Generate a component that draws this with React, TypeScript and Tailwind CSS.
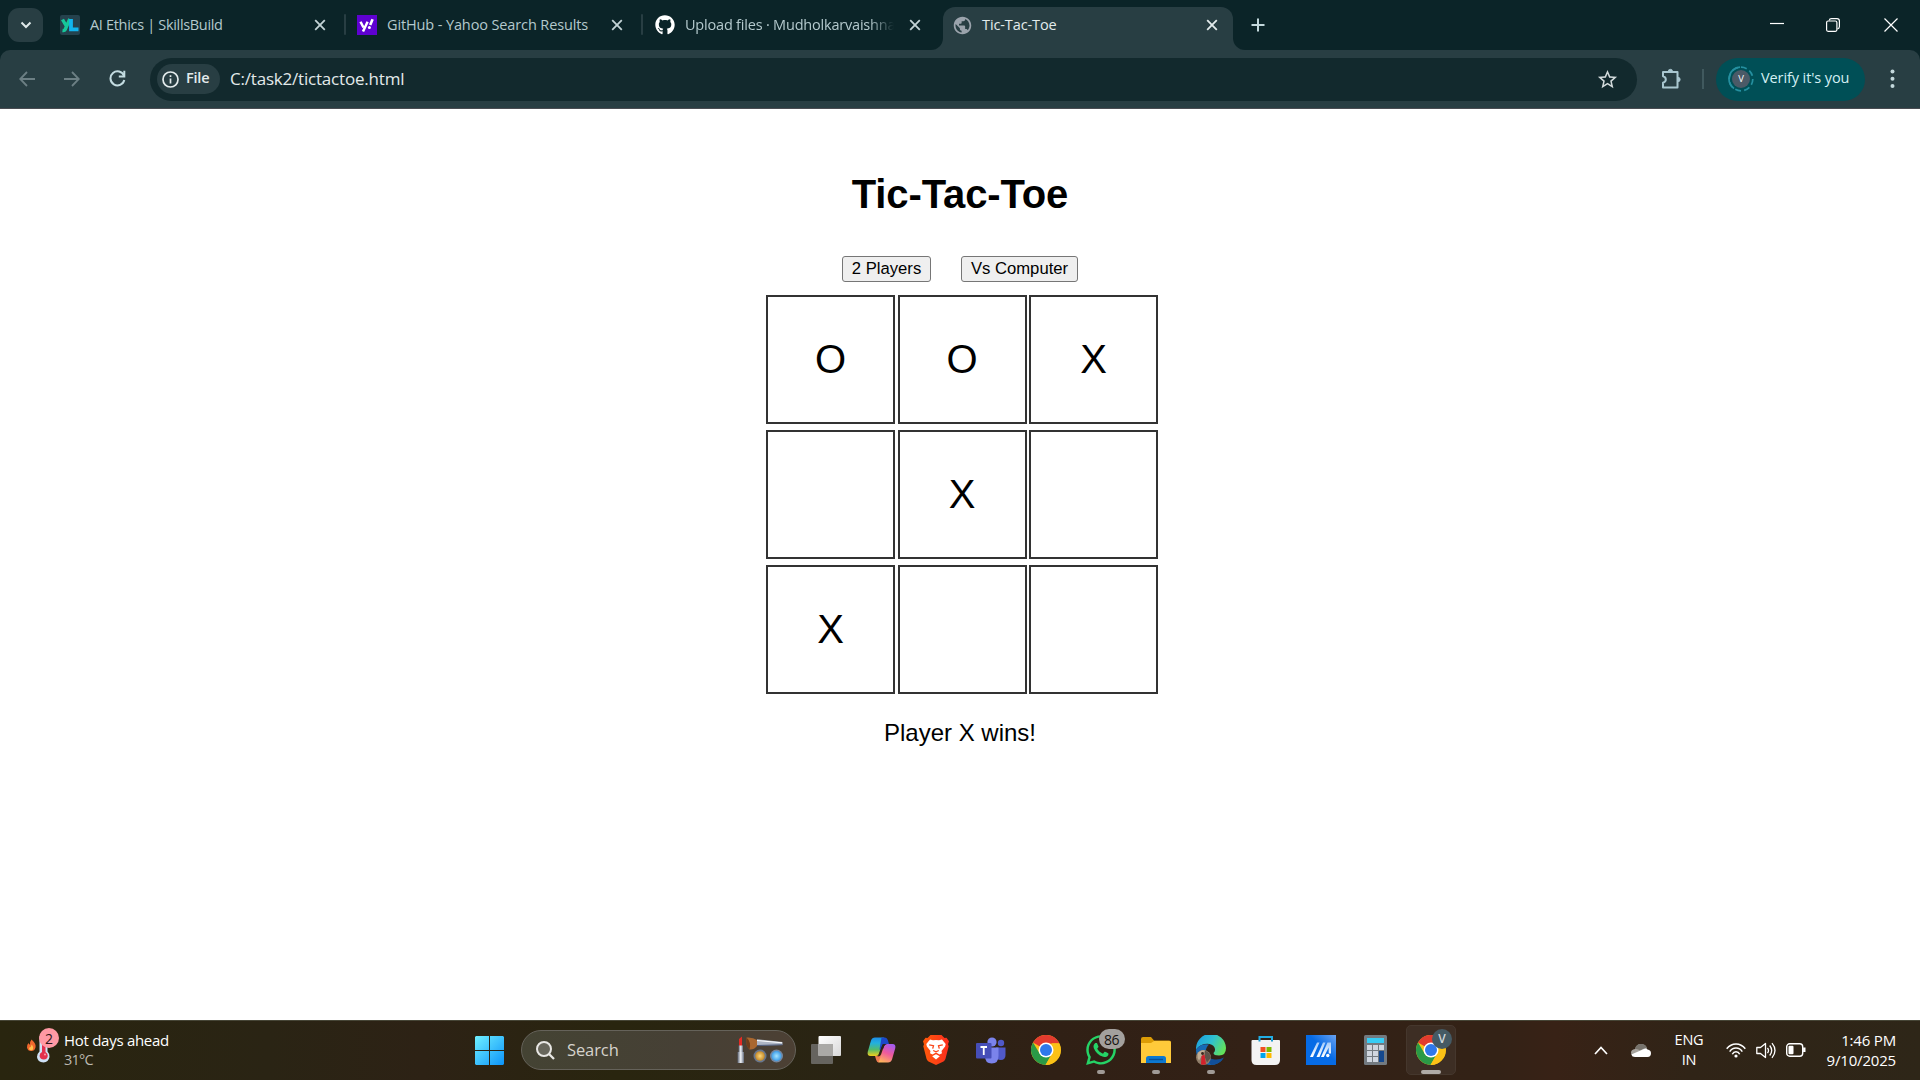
import React from "react";
import { FaGithub, FaWhatsapp } from "react-icons/fa";
import { MdPublic, MdStarBorder } from "react-icons/md";

function CloseX({ color = "#c3d3d6" }: { color?: string }) {
  return (
    <svg width="12" height="12" viewBox="0 0 12 12" fill="none" stroke={color} strokeWidth="1.8">
      <path d="M1.2 1.2l9.6 9.6M10.8 1.2l-9.6 9.6" />
    </svg>
  );
}

function SkillsBuildLogo() {
  return (
    <span className="flex h-5 w-5 items-center justify-center overflow-hidden rounded-[2px] bg-[#25424d]">
      <svg width="20" height="20" viewBox="0 0 20 20" fill="none" strokeWidth="3.4">
        <path d="M2.5 4.5L6 10.5M9.8 4L5.2 14.5Q4.600 15.800 2.500 15.500" stroke="#16c79a" />
        <path d="M11 4v10.300h7.500" stroke="#12b5ee" strokeWidth="3.800" />
      </svg>
    </span>
  );
}

function YahooLogo() {
  return (
    <span className="flex h-5 w-5 items-center justify-center bg-[#5f01d1]">
      <svg width="20" height="20" viewBox="0 0 20 20" fill="none" stroke="#fff">
        <path d="M3.500 6.700L6.500 12.500M10.600 6.700L6 16.500" strokeWidth="2.500" />
        <path d="M15.600 4.200L13.200 10" strokeWidth="2.600" />
        <circle cx="12.400" cy="12.600" r="1.500" fill="#fff" stroke="none" />
      </svg>
    </span>
  );
}

function TabStrip() {
  return (
    <div className="flex h-[50px] items-start bg-[#0b2428] text-[15px] text-[#b4c9cd]">
      <div className="ml-2 mt-2 flex h-[34px] w-[35px] items-center justify-center rounded-[11px] bg-[#283e43]">
        <svg width="12" height="8" viewBox="0 0 12 8" fill="none" stroke="#dfe9ea" strokeWidth="2">
          <path d="M1.500 1.500L6 6l4.500-4.500" />
        </svg>
      </div>
      <div className="ml-[17px] flex h-[50px] w-[284px] items-center">
        <SkillsBuildLogo />
        <span className="ml-[10px] w-[224px] whitespace-nowrap text-[14.500px] tracking-[-0.32px]">AI Ethics | SkillsBuild</span>
        <CloseX />
      </div>
      <div className="mt-[14px] h-[21px] w-[2px] rounded bg-[#283e43]" />
      <div className="ml-[11px] flex h-[50px] w-[284px] items-center">
        <YahooLogo />
        <span className="ml-[10px] w-[224px] whitespace-nowrap text-[14.500px] tracking-[-0.12px]">GitHub - Yahoo Search Results</span>
        <CloseX />
      </div>
      <div className="mt-[14px] h-[21px] w-[2px] rounded bg-[#283e43]" />
      <div className="ml-[12px] flex h-[50px] w-[276px] items-center">
        <FaGithub size={20} color="#fff" />
        <span className="ml-[10px] mr-[15px] w-[209px] whitespace-nowrap text-[14.500px] tracking-[-0.2px] [mask-image:linear-gradient(to_right,#000_88%,transparent)]">
          Upload files · Mudholkarvaishna
        </span>
        <CloseX />
      </div>
      <div className="flex h-[50px] w-[12px] items-end bg-[#283e43]">
        <div className="h-[50px] w-[12px] rounded-br-[12px] bg-[#0b2428]" />
      </div>
      <div className="h-[50px] w-[290px] bg-[#0b2428] pt-[7px]">
        <div className="flex h-[43px] items-center rounded-t-[12px] bg-[#283e43] pb-[7px] pl-[9px] text-[#e3ebec]">
          <MdPublic size={21} color="#9ba3ac" />
          <span className="ml-[9px] w-[224px] whitespace-nowrap text-[14.500px] tracking-[-0.1px]">Tic-Tac-Toe</span>
          <CloseX color="#e3ebec" />
        </div>
      </div>
      <div className="flex h-[50px] w-[12px] items-end bg-[#283e43]">
        <div className="h-[50px] w-[12px] rounded-bl-[12px] bg-[#0b2428]" />
      </div>
      <svg className="ml-[6px] mt-[18px]" width="14" height="14" viewBox="0 0 14 14" stroke="#c3d8dc" strokeWidth="2">
        <path d="M7 .5v13M.5 7h13" />
      </svg>
      <div className="ml-auto mr-[22px] flex h-[50px] items-center gap-[49px]">
        <svg width="14" height="14" viewBox="0 0 14 14" stroke="#fff" strokeWidth="1.200">
          <path d="M0 5.500h14" />
        </svg>
        <svg className="-ml-[7px]" width="14" height="14" viewBox="0 0 14 14" fill="none" stroke="#fff" strokeWidth="1.200">
          <rect x=".6" y="3" width="10.300" height="10.300" rx="1.500" />
          <path d="M3.200 2.500Q3.500.6 5.500.6h5.500q2.400 0 2.400 2.400v5.500q0 2-1.900 2.400" />
        </svg>
        <svg className="-ml-[5px]" width="14" height="14" viewBox="0 0 14 14" stroke="#fff" strokeWidth="1.200">
          <path d="M.5.5l13 13M13.500.5l-13 13" />
        </svg>
      </div>
    </div>
  );
}

function Toolbar() {
  return (
    <div className="h-[59px] bg-[#0b2428]">
      <div className="flex h-[59px] items-center rounded-t-[10px] border-b border-[#4a4c52] bg-[#283e43]">
        <svg className="-mt-[1px] ml-[19px]" width="16" height="16" viewBox="0 0 16 16" fill="none" stroke="#6c7f84" strokeWidth="1.800">
          <path d="M16 8H1.500M8 1L1.200 8 8 15" />
        </svg>
        <svg className="-mt-[1px] ml-[29px]" width="16" height="16" viewBox="0 0 16 16" fill="none" stroke="#6c7f84" strokeWidth="1.800">
          <path d="M0 8h14.500M8 1l6.800 7L8 15" />
        </svg>
        <svg className="-mt-[1px] ml-[29px]" width="17" height="17" viewBox="0 0 17 17" fill="none" stroke="#c3dce1" strokeWidth="2">
          <path d="M15 5.800A7 7 0 1 0 15.300 10" />
          <path d="M15.300.8v5.700H9.800" />
        </svg>
        <div className="ml-[24px] flex h-[43px] w-[1487px] items-center rounded-full bg-[#12292d] pl-[7px]">
          <div className="flex h-[30px] w-[63px] items-center rounded-full bg-[#283e43] pl-[5px]">
            <svg width="17" height="17" viewBox="0 0 17 17" fill="none" stroke="#e3ebec" strokeWidth="1.700">
              <circle cx="8.500" cy="8.500" r="7.500" />
              <path d="M8.500 7.500v5M8.500 4.200v1.800" />
            </svg>
            <span className="-mt-[2px] ml-[7px] text-[14.500px] font-semibold tracking-[-0.2px] text-[#e3ebec]">File</span>
          </div>
          <span className="ml-[10px] whitespace-nowrap text-[17px] tracking-[-0.2px] text-[#e3e9ea]">C:/task2/tictactoe.html</span>
          <MdStarBorder className="ml-auto mr-[18px]" size={23} color="#d2dadb" />
        </div>
        <svg className="ml-[23px]" width="22" height="22" viewBox="0 0 22 22" fill="none" stroke="#a9c7d0" strokeWidth="2">
          <path d="M3 4h14.500v15.500H3v-4.800q2.800-.8 2.800-3.200T3 8.300z" strokeLinejoin="round" />
          <path d="M8.200 3.500a2.200 2.200 0 0 1 4.400 0zM18 9.300a2.200 2.200 0 0 1 0 4.400z" fill="#a9c7d0" strokeWidth=".8" />
        </svg>
        <div className="ml-[20px] h-[20px] w-[2px] bg-[#40595e]" />
        <div className="ml-[12px] flex h-[43px] w-[149px] items-center rounded-full bg-[#004f56] pl-[12px]">
          <span className="relative flex h-[26px] w-[26px] items-center justify-center text-[9.500px] text-white">
            <svg className="absolute inset-0" width="26" height="26" viewBox="0 0 26 26" fill="none">
              <circle cx="13" cy="13" r="9" fill="#4b5a67" />
              <path d="M12 1.200A11.800 11.800 0 0 0 6 22.500" stroke="#2590a0" strokeWidth="1.700" />
              <circle cx="13" cy="13" r="11.800" stroke="#2590a0" strokeWidth="1.700" strokeDasharray="6 3.200" />
            </svg>
            <span className="relative">V</span>
          </span>
          <span className="-mt-[2px] ml-[7px] whitespace-nowrap text-[14.500px] tracking-[-0.1px] text-[#d3f0f4]">Verify it's you</span>
        </div>
        <svg className="ml-[25px]" width="5" height="20" viewBox="0 0 5 20" fill="#c3d8dc">
          <circle cx="2.500" cy="2.500" r="2" />
          <circle cx="2.500" cy="9.800" r="2" />
          <circle cx="2.500" cy="17" r="2" />
        </svg>
      </div>
    </div>
  );
}

const board = ["O", "O", "X", "", "X", "", "X", "", ""];

function Game() {
  return (
    <main className="flex h-[911px] flex-col items-center bg-white font-['Liberation_Sans',Arial,sans-serif] text-black">
      <h1 className="mt-[62px] text-[40px] font-bold leading-[46px] tracking-[-0.12px]">Tic-Tac-Toe</h1>
      <div className="mt-[39px] flex gap-[30px]">
        <button className="h-[26px] w-[89px] rounded-[3px] border border-[#767676] bg-[#efefef] text-[16.670px] leading-[22px]">2 Players</button>
        <button className="h-[26px] w-[117px] rounded-[3px] border border-[#767676] bg-[#efefef] text-[16.670px] leading-[22px]">Vs Computer</button>
      </div>
      <div className="ml-[4px] mt-[13px] grid grid-cols-[129px_129px_129px] gap-x-[2.500px] gap-y-[6px]">
        {board.map((mark, i) => (
          <div key={i} className="flex h-[129px] items-center justify-center border-2 border-[#333] pb-[2px] text-[40px] leading-[46px]">
            {mark}
          </div>
        ))}
      </div>
      <p className="mt-[25px] text-[24px] leading-[28px]">Player X wins!</p>
    </main>
  );
}

function Slot({ children, dot }: { children: React.ReactNode; dot?: boolean }) {
  return (
    <div className="relative flex h-[60px] w-[55px] shrink-0 items-center justify-center">
      {children}
      {dot && <span className="absolute bottom-[6px] left-[23px] h-[4px] w-[8px] rounded-full bg-[#a09a96]" />}
    </div>
  );
}

function ChromeIcon() {
  return (
    <svg width="30" height="30" viewBox="0 0 30 30">
      <circle cx="15" cy="15" r="15" fill="#fbc116" />
      <path d="M15 15L2 7.500A15 15 0 0 1 28 7.500L28 8.500H15z" fill="#e33b2e" />
      <path d="M2 7.500A15 15 0 0 0 14.500 30L21 18.500 15 15 8.800 18.700z" fill="#2a9a47" />
      <path d="M28 8.200A15 15 0 0 1 14.500 30L21.200 18.500 21 8.200z" fill="#fbc116" />
      <circle cx="15" cy="15" r="7.500" fill="#fff" />
      <circle cx="15" cy="15" r="6" fill="#2f78ea" />
    </svg>
  );
}

function Cosmetics() {
  return (
    <svg width="47" height="28" viewBox="0 0 47 28">
      <defs>
        <linearGradient id="metal" x1="0" x2="1">
          <stop offset="0" stopColor="#5a6170" />
          <stop offset=".5" stopColor="#f2f5fa" />
          <stop offset="1" stopColor="#626a7a" />
        </linearGradient>
        <radialGradient id="gold">
          <stop offset="0" stopColor="#ffd879" />
          <stop offset="1" stopColor="#c3892b" />
        </radialGradient>
        <radialGradient id="sky">
          <stop offset="0" stopColor="#a7e5ff" />
          <stop offset="1" stopColor="#3c9de9" />
        </radialGradient>
      </defs>
      <path d="M2 10V3l3-2.500V10z" fill="#e52b25" />
      <rect x="1.500" y="9.500" width="4.500" height="7" fill="url(#metal)" />
      <rect x=".5" y="16" width="6.500" height="11" fill="url(#metal)" />
      <path d="M20 3.200L45.500 6v3L20 10z" fill="#aeb6c5" />
      <path d="M20 4.500L45 6.800" stroke="#fff" />
      <path d="M20 9.500L45.500 8.800" stroke="#495675" />
      <path d="M9.500 1.500Q16 1 20 4v6q-3 4-7.500 3.500Q8.500 10 9.500 1.500z" fill="#a9672f" />
      <path d="M9.500 1.500Q14.500 6 12.500 13.500 8 10 9.500 1.500z" fill="#6d3c1a" />
      <circle cx="23" cy="20" r="6.500" fill="#68768e" />
      <circle cx="23" cy="20" r="4.800" fill="url(#gold)" />
      <circle cx="39.500" cy="20" r="6.500" fill="#75869f" />
      <circle cx="39.500" cy="20" r="5" fill="url(#sky)" />
    </svg>
  );
}

function CopilotIcon() {
  return (
    <svg width="29" height="26" viewBox="0 0 29 26">
      <defs>
        <linearGradient id="cpA" x1="0" y1="0" x2="0" y2="1">
          <stop offset="0" stopColor="#1d8ee6" />
          <stop offset=".3" stopColor="#22b0e0" />
          <stop offset=".65" stopColor="#52bb6c" />
          <stop offset="1" stopColor="#f2cf1b" />
        </linearGradient>
        <linearGradient id="cpB" x1=".7" y1="0" x2=".3" y2="1">
          <stop offset="0" stopColor="#a45bef" />
          <stop offset=".5" stopColor="#ef5a9c" />
          <stop offset="1" stopColor="#ffb25c" />
        </linearGradient>
      </defs>
      <path d="M8 .5h9L12 16.500Q11.300 19 9 19H3.500Q0 19 .7 15L4 3.500Q5 .5 8 .5z" fill="url(#cpA)" />
      <path d="M14.500.5H18q2 0 2.800 2.500L22 7h-4.500q-2 0-2.800 2.500l-1.200 3.200-1-.2z" fill="#1b48c8" />
      <path d="M12 25.500q-2 0-2.800-2.500L8 19h2.500q2 0 2.800-2.500l2-5 2 .5z" fill="#ee7a50" />
      <path d="M21 25.500h-9.500L17 9.500Q17.800 7 20 7h5.500q3.500 0 2.800 4L25 22.500q-1 3-4 3z" fill="url(#cpB)" />
      <path d="M15.800 7h3.500q-1.800.5-2.500 2.500L14 17.500Q13.200 19.500 11 19.500h-.8q1.500-.5 2-2.500z" fill="#2c2118" />
    </svg>
  );
}

function BraveIcon() {
  return (
    <svg width="26" height="30" viewBox="0 0 26 30">
      <defs>
        <linearGradient id="brave" x1="0" x2="1">
          <stop offset="0" stopColor="#ff5a0a" />
          <stop offset="1" stopColor="#fb2d1e" />
        </linearGradient>
      </defs>
      <path d="M7.500 0h11l3 3 2-.2L26 6.200l-1 3 .7 2-3.200 12.500q-.5 1.700-2 2.800L13 30l-7.500-3.500q-1.500-1-2-2.800L.3 11.200l.7-2-1-3L2.500 2.800l2 .2z" fill="url(#brave)" />
      <path d="M7 4.500l3 .8L13 5l3 .3 3-.8 3.700 4.600-.6 2.400L18.500 16l.5 2.200-2.500 1.300L13 17.500l-3.500 2L7 18.200 7.500 16l-3.600-4.500-.6-2.400z" fill="#fff" />
      <path d="M9.200 21.200L13 19.300l3.800 1.900L13 24.500z" fill="#fff" />
      <path d="M6.200 9.800l4.300.9-.8 3M19.800 9.800l-4.300.9.8 3M10.200 15.500l2.800 1.300 2.800-1.300" stroke="#fa4519" strokeWidth="1.300" fill="none" />
    </svg>
  );
}

function TeamsIcon() {
  return (
    <svg width="30" height="28" viewBox="0 0 30 28">
      <circle cx="25" cy="7" r="3.200" fill="#5059c9" />
      <path d="M20 11.500h9.500v7.500q0 5-4.700 5-4.800 0-4.800-5z" fill="#5059c9" />
      <circle cx="16" cy="6" r="4.600" fill="#7b83eb" />
      <path d="M9 11.500h13.500V20q0 7.500-6.800 7.500T9 20z" fill="#7b83eb" />
      <rect x="0" y="7" width="15.500" height="15.500" rx="1" fill="#464eb8" />
      <path d="M4.500 11h6.500M7.750 11v8" stroke="#fff" strokeWidth="1.800" />
    </svg>
  );
}

function FolderIcon() {
  return (
    <svg width="30" height="26" viewBox="0 0 30 26">
      <path d="M0 2Q0 0 2 0h8l3 3.500h15q2 0 2 2V8H0z" fill="#dc9c06" />
      <path d="M0 6h10l3-2h15.500q1.500 0 1.500 1.500V26H0z" fill="#ffca3a" />
      <path d="M5 26v-4.500Q5 19 7.500 19h15q2.500 0 2.500 2.500V26z" fill="#0c78d0" />
      <path d="M8 22.500h14" stroke="#084f98" strokeWidth="1.400" />
    </svg>
  );
}

function EdgeIcon() {
  return (
    <svg width="30" height="30" viewBox="0 0 30 30">
      <defs>
        <linearGradient id="edge" x1="0" y1=".2" x2="1" y2=".6">
          <stop offset="0" stopColor="#1b9fe0" />
          <stop offset=".5" stopColor="#2fc0d0" />
          <stop offset="1" stopColor="#63e25a" />
        </linearGradient>
      </defs>
      <path d="M0 14.500A15 15 0 0 1 30 13q0 7.500-7 7.500-5.500 0-5.500-2.500 1.800-1.500 1.500-4-.7-4-5.500-5Q5 8 0 14.500z" fill="url(#edge)" />
      <path d="M0 14.500Q5 8 13 9.500 9 13 10 19q2 8 10 7.500 4 0 7.500-3.500Q23 30 15 30A15 15 0 0 1 0 14.500z" fill="#1769b5" />
      <path d="M10.500 16q.5 8 8 8.500 5 .5 9.500-2Q23 30 15 30q-5-5-4.500-14z" fill="#114f99" />
      <circle cx="7.500" cy="22.500" r="7.500" fill="#8f7d69" />
      <path d="M1.500 19Q4 14.500 9 15.500l-3 5-3 5Q1 23 1.500 19z" fill="#c0ae96" />
      <path d="M9 15.500q5 2 6 7l-4 5-2-5z" fill="#5d534a" />
      <path d="M5.500 21l3-1.500 1.500 9.500q-3 1.500-5 .2z" fill="#d3222c" />
      <circle cx="6.500" cy="18.500" r="1.400" fill="#3a2820" />
    </svg>
  );
}

function StoreIcon() {
  return (
    <svg width="30" height="30" viewBox="0 0 30 30">
      <path d="M8.500 6V2h12.500v4" fill="none" stroke="#22aee4" strokeWidth="2" />
      <path d="M.5 6q0-1 1-1h26.500q1 0 1 1v19q0 5-5 5H5.500q-5 0-5-5z" fill="#f3f3f3" />
      <rect x="9.500" y="12" width="5" height="5" fill="#f25022" />
      <rect x="15.500" y="12" width="5" height="5" fill="#7fba00" />
      <rect x="9.500" y="18" width="5" height="5" fill="#00a4ef" />
      <rect x="15.500" y="18" width="5" height="5" fill="#ffb900" />
      <path d="M8.500 5v1.500M21 5v1.500" stroke="#1698cf" strokeWidth="2" />
    </svg>
  );
}

function MyAsusIcon() {
  return (
    <svg width="30" height="30" viewBox="0 0 30 30">
      <defs>
        <linearGradient id="asus" x1="0" y1="1" x2="1" y2="0">
          <stop offset=".55" stopColor="#066be6" />
          <stop offset="1" stopColor="#6aa3f2" />
        </linearGradient>
        <linearGradient id="stroke" x1="0" y1="1" x2="0" y2="0">
          <stop offset="0" stopColor="#fff" />
          <stop offset="1" stopColor="#a4cbfa" />
        </linearGradient>
      </defs>
      <rect width="30" height="30" fill="url(#asus)" />
      <path d="M4 22L11 7.500h2.500L7 22zM10.500 22L17 7.500h2.500L13.500 22z" fill="url(#stroke)" />
      <path d="M15 22L21.500 7.500H25v11h-2.300v-6L17.800 22z" fill="url(#stroke)" />
      <circle cx="21.800" cy="20.500" r="1.700" fill="#fff" />
    </svg>
  );
}

function CalculatorIcon() {
  return (
    <svg className="-ml-[2px]" width="23" height="30" viewBox="0 0 23 30">
      <rect width="23" height="30" rx="1.500" fill="#737a80" />
      <rect x="3" y="3" width="17" height="5" fill="#37cdf5" />
      <g fill="#d0d6df">
        <rect x="3" y="10" width="5" height="5" />
        <rect x="9" y="10" width="5" height="5" />
        <rect x="15" y="10" width="5" height="5" />
        <rect x="3" y="16" width="5" height="5" />
        <rect x="9" y="16" width="5" height="5" />
        <rect x="3" y="22" width="5" height="5" />
        <rect x="9" y="22" width="5" height="5" />
      </g>
      <rect x="15" y="16" width="5" height="11" fill="#14488e" />
    </svg>
  );
}

function Taskbar() {
  return (
    <footer className="flex h-[60px] items-center bg-[linear-gradient(to_right,#29250f_0%,#2a2414_14%,#2d2215_22%,#29250f_32%,#2a2414_45%,#302015_55%,#332116_65%,#332216_78%,#382216_81%,#302417_88%,#2e2618_100%)] shadow-[inset_0_1px_0_#464536]">
      <div className="relative ml-[26px] h-[60px] w-[38px] shrink-0">
        <svg className="absolute left-0 top-[16px]" width="30" height="28" viewBox="0 0 30 28">
          <path d="M5.500 3.500q5 4.500 4 8-.8 3.500-4.300 3.500T1 11.500Q.7 9 2.500 7q.5 1.500 1.500 1.500Q3.500 6 5.500 3.500z" fill="#f0682d" />
          <path d="M5.700 8.500q2.500 3 .8 5.500-2.500 1-3.500-1 0-2 1.700-2z" fill="#ffc04c" />
          <path d="M13.500 0h8v15.500q2.500 2.500 2 5.500-1 5-6 5.500-6-.5-6.500-5.500-.2-3 2.500-5.500z" fill="#cfe2f6" />
          <path d="M16 4h3.500v12q2.300 1.200 2.300 3.800-.2 3.500-4 3.700-4-.2-4.200-3.700 0-2.600 2.400-3.800z" fill="#e3304d" />
          <circle cx="19" cy="18.500" r="1" fill="#f7a0ab" />
        </svg>
        <span className="absolute left-[13px] top-[8px] flex h-[20px] w-[20px] items-center justify-center rounded-full bg-[#ff99a4] text-[14px] text-[#2a1519]">2</span>
      </div>
      <div className="-mt-[1px] w-[411px] text-[15px] leading-[20px]">
        <p className="tracking-[-0.28px] text-white">Hot days ahead</p>
        <p className="text-[14.500px] tracking-[-0.8px] text-[#bdb9b0]">31°C</p>
      </div>
      <svg width="29" height="29" viewBox="0 0 29 29">
        <defs>
          <linearGradient id="win" x1="0" y1="0" x2="1" y2="1">
            <stop offset="0" stopColor="#6ff0ff" />
            <stop offset="1" stopColor="#0c93fa" />
          </linearGradient>
        </defs>
        <path d="M1 0h13v14H0V1zM15 0h13l1 1v13H15zM0 15h14v14H1l-1-1zM15 15h14v13l-1 1H15z" fill="url(#win)" />
      </svg>
      <div className="ml-[17px] flex h-[40px] w-[275px] shrink-0 items-center rounded-full border border-[#65625a] bg-[linear-gradient(to_right,#444333,#464035_60%,#4c4034)] pl-[14px] pr-[11px]">
        <svg width="19" height="19" viewBox="0 0 19 19" fill="none" stroke="#e8e7e4" strokeWidth="2">
          <circle cx="8" cy="8" r="7" fill="#68675c" />
          <path d="M13 13l5 5" strokeWidth="2.300" />
        </svg>
        <span className="ml-[12px] mt-[1px] text-[16.500px] tracking-[-0.1px] text-[#d6d3cc]">Search</span>
        <span className="ml-auto">
          <Cosmetics />
        </span>
      </div>
      <div className="ml-[2.500px] flex">
        <Slot>
          <svg width="30" height="28" viewBox="0 0 30 28">
            <defs>
              <linearGradient id="tvw" x1="0" y1="0" x2="1" y2="1">
                <stop offset="0" stopColor="#fff" />
                <stop offset="1" stopColor="#d8d8d8" />
              </linearGradient>
            </defs>
            <rect x="0" y="8" width="22" height="20" rx="1" fill="#66645f" />
            <rect x="7.500" y="0" width="22.500" height="20" rx="1" fill="url(#tvw)" />
            <path d="M7.500 8H22v12H7.500z" fill="#aaa9a6" />
          </svg>
        </Slot>
        <Slot><CopilotIcon /></Slot>
        <Slot><BraveIcon /></Slot>
        <Slot><TeamsIcon /></Slot>
        <Slot><ChromeIcon /></Slot>
        <Slot dot>
          <FaWhatsapp size={34} color="#25d366" />
          <span className="absolute left-[25px] top-[9px] flex h-[20px] w-[26px] items-center justify-center rounded-full bg-[#a3a09d] text-[14px] tracking-[-0.6px] text-[#171310]">86</span>
        </Slot>
        <Slot dot><FolderIcon /></Slot>
        <Slot dot><EdgeIcon /></Slot>
        <Slot><StoreIcon /></Slot>
        <Slot><MyAsusIcon /></Slot>
        <Slot><CalculatorIcon /></Slot>
        <Slot>
          <span className="relative flex h-[50px] w-[50px] items-center justify-center rounded-[5px] border border-[#45372d] bg-[#3d2e24]">
            <ChromeIcon />
            <span className="absolute left-[25px] top-[3px] flex h-[20px] w-[20px] items-center justify-center rounded-full bg-[#455a64] text-[12px] font-semibold text-[#cfd6da]">V</span>
            <span className="absolute bottom-0 left-[14px] h-[4px] w-[20px] rounded-full bg-[#b0aba7]" />
          </span>
        </Slot>
      </div>
      <div className="ml-auto mr-[24px] flex items-center text-[15px] leading-[20px] text-white">
        <svg width="14" height="9" viewBox="0 0 14 9" fill="none" stroke="#fff" strokeWidth="1.700">
          <path d="M1 8l6-6.500L13 8" />
        </svg>
        <svg className="ml-[23px]" width="20" height="13" viewBox="0 0 20 13">
          <path d="M4.500 12Q0 12 0 8.500 0 5.500 4 5q1.500-5 6-5 4 0 5.500 3.500L17 8z" fill="#a6a39d" />
          <path d="M4 5q3-.5 5 1.500L13 4.500l3-.3Q15 0 10 0T4 5z" fill="#77736c" />
          <path d="M4 13Q1 13 .3 10.500L13 5q2-1 3.500.5Q20 6 20 9.300 20 13 16.500 13z" fill="#fff" />
        </svg>
        <div className="ml-[22px] w-[32px] text-center text-[14.500px] tracking-[-0.2px]">
          <p>ENG</p>
          <p>IN</p>
        </div>
        <svg className="ml-[21px]" width="20" height="15" viewBox="0 0 20 15" fill="none" stroke="#fff" strokeWidth="1.500">
          <path d="M.7 5.800Q4.500 1 10 1t9.300 4.800M3.700 8.600Q6 5 10 5t6.300 3.600M6.300 11.300Q7.500 8.800 10 8.800t3.700 2.500" />
          <circle cx="10" cy="13" r="1.600" fill="#fff" stroke="none" />
        </svg>
        <svg className="ml-[10px]" width="20" height="17" viewBox="0 0 20 17" fill="none" stroke="#fff" strokeWidth="1.300">
          <path d="M.8 5.500h3.700L9.500 1.500v14L4.500 11.500H.8z" strokeLinejoin="round" />
          <path d="M11.500 5.800q2 2.700 0 5.400M13.700 3.500q4 5 0 10M16 1.200q6 7.300 0 14.600" />
        </svg>
        <svg className="ml-[10px]" width="20" height="14" viewBox="0 0 20 14" fill="none" stroke="#fff" strokeWidth="1.400">
          <rect x=".7" y=".8" width="16" height="12.400" rx="3" />
          <rect x="2.500" y="2.800" width="5" height="8.400" rx="1" fill="#fff" stroke="none" />
          <path d="M18.300 4.500v4.500" strokeWidth="2.400" />
        </svg>
        <div className="-mt-[1px] w-[90px] whitespace-nowrap text-right text-[15px] tracking-[-0.18px]">
          <p>1:46 PM</p>
          <p>9/10/2025</p>
        </div>
      </div>
    </footer>
  );
}

export default function App() {
  return (
    <div className="flex h-[1080px] w-[1920px] flex-col overflow-hidden bg-white font-['Open_Sans','Noto_Sans',sans-serif]">
      <TabStrip />
      <Toolbar />
      <Game />
      <Taskbar />
    </div>
  );
}
